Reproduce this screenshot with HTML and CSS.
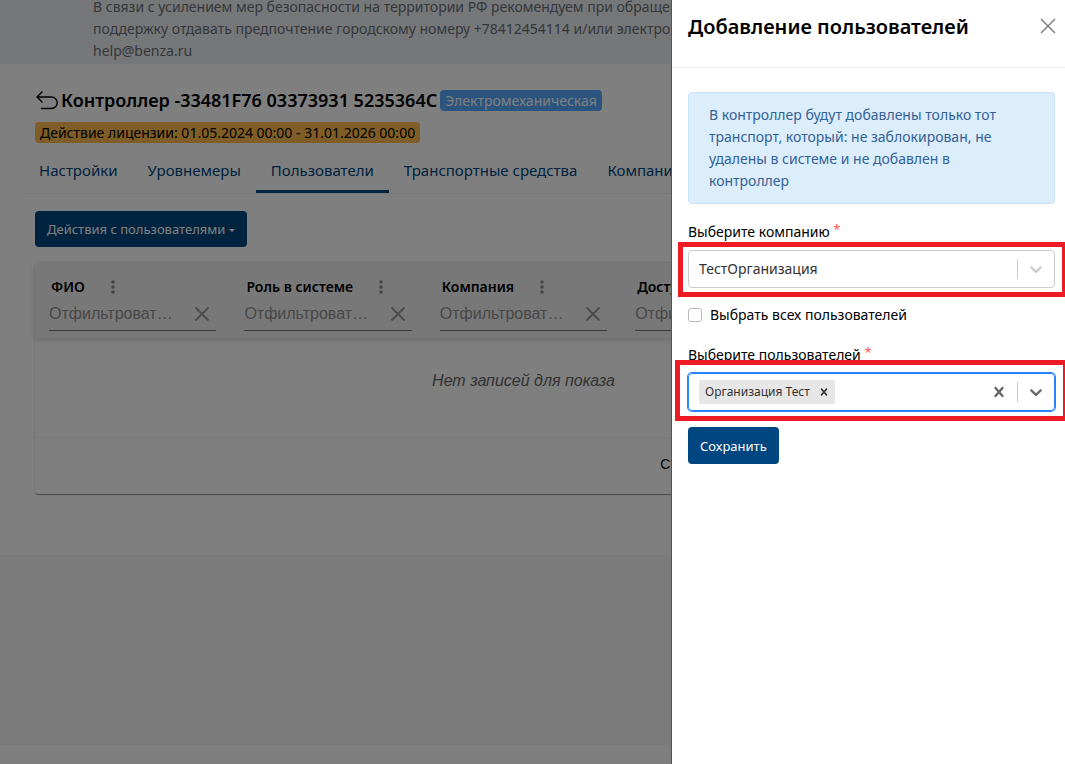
FILE: index.html
```html
<!DOCTYPE html>
<html lang="ru">
<head>
  <meta charset="utf-8">
  <meta name="viewport" content="width=device-width, initial-scale=1">
  <title>Добавление пользователей</title>
  <link rel="stylesheet" href="styles.css">
</head>
<body>
  <div class="page">
    <header class="notice">
      <p>В связи с усилением мер безопасности на территории РФ рекомендуем при обращении в<br>
      поддержку отдавать предпочтение городскому номеру +78412454114 и/или электронной почте<br>
      help@benza.ru</p>
    </header>

    <main class="content">
      <div class="title">
        <a class="back" href="#" aria-label="Назад">
          <svg width="22" height="19" viewBox="0 0 22 19" fill="none" stroke="#000" stroke-width="1.4" stroke-linecap="round" stroke-linejoin="round"><path d="M6 1L1 6l5 5M1 6h14.500a5.600 5.600 0 0 1 0 11.500H5.500"/></svg>
        </a>
        <h1>Контроллер -33481F76 03373931 5235364C</h1>
        <span class="badge badge-info">Электромеханическая</span>
      </div>
      <span class="badge badge-warning">Действие лицензии: 01.05.2024 00:00 - 31.01.2026 00:00</span>

      <nav class="tabs">
        <a href="#">Настройки</a>
        <a href="#">Уровнемеры</a>
        <a href="#" class="active">Пользователи</a>
        <a href="#">Транспортные средства</a>
        <a href="#">Компании</a>
      </nav>

      <button type="button" class="btn btn-actions">Действия с пользователями <span class="caret"></span></button>

      <div class="table-card">
        <table>
          <thead>
            <tr>
              <th>
                <div class="th-label">ФИО <svg width="4" height="14" viewBox="0 0 4 14" fill="#8c8c8c"><circle cx="2" cy="2" r="1.800"/><circle cx="2" cy="7" r="1.800"/><circle cx="2" cy="12" r="1.800"/></svg></div>
                <div class="filter"><input type="text" placeholder="Отфильтровать по ФИО" aria-label="ФИО"><svg width="14" height="14" viewBox="0 0 14 14" stroke="#999" stroke-width="2"><path d="M.5.5l13 13M13.500.5l-13 13"/></svg></div>
              </th>
              <th>
                <div class="th-label">Роль в системе <svg width="4" height="14" viewBox="0 0 4 14" fill="#8c8c8c"><circle cx="2" cy="2" r="1.800"/><circle cx="2" cy="7" r="1.800"/><circle cx="2" cy="12" r="1.800"/></svg></div>
                <div class="filter"><input type="text" placeholder="Отфильтровать по роли" aria-label="Роль в системе"><svg width="14" height="14" viewBox="0 0 14 14" stroke="#999" stroke-width="2"><path d="M.5.5l13 13M13.500.5l-13 13"/></svg></div>
              </th>
              <th>
                <div class="th-label">Компания <svg width="4" height="14" viewBox="0 0 4 14" fill="#8c8c8c"><circle cx="2" cy="2" r="1.800"/><circle cx="2" cy="7" r="1.800"/><circle cx="2" cy="12" r="1.800"/></svg></div>
                <div class="filter"><input type="text" placeholder="Отфильтровать по компании" aria-label="Компания"><svg width="14" height="14" viewBox="0 0 14 14" stroke="#999" stroke-width="2"><path d="M.5.5l13 13M13.500.5l-13 13"/></svg></div>
              </th>
              <th>
                <div class="th-label">Доступ</div>
                <div class="filter"><input type="text" placeholder="Отфильтровать по доступу" aria-label="Доступ"></div>
              </th>
              <th></th>
            </tr>
          </thead>
          <tbody>
            <tr><td colspan="5">Нет записей для показа</td></tr>
          </tbody>
        </table>
        <div class="table-footer"><span>Строк на странице</span></div>
      </div>
    </main>
    <footer class="footer"></footer>
  </div>

  <div class="backdrop"></div>

  <aside class="drawer" role="dialog" aria-labelledby="drawer-title">
    <div class="drawer-header">
      <h2 id="drawer-title">Добавление пользователей</h2>
      <button type="button" class="icon-btn" aria-label="Закрыть">
        <svg width="16" height="16" viewBox="0 0 16 16" stroke="#808080" stroke-width="1.500"><path d="M1 1l14 14M15 1L1 15"/></svg>
      </button>
    </div>
    <form class="drawer-body">
      <div class="alert">В контроллер будут добавлены только тот транспорт, который: не заблокирован, не удалены в системе и не добавлен в контроллер</div>

      <label class="label" for="company">Выберите компанию <sup>*</sup></label>
      <div class="control">
        <select id="company"><option>ТестОрганизация</option></select>
        <span class="separator"></span>
        <svg class="chevron" width="20" height="20" viewBox="0 0 20 20" fill="#ccc"><path d="M4.516 7.548c0.436-0.446 1.043-0.481 1.576 0l3.908 3.747 3.908-3.747c0.533-0.481 1.141-0.446 1.574 0 0.436 0.445 0.408 1.197 0 1.615-0.406 0.418-4.695 4.502-4.695 4.502-0.217 0.223-0.502 0.335-0.787 0.335s-0.570-0.112-0.789-0.335c0 0-4.287-4.084-4.695-4.502s-0.436-1.170 0-1.615z"/></svg>
        <span class="mark"></span>
      </div>

      <div class="check">
        <input type="checkbox" id="all">
        <label for="all">Выбрать всех пользователей</label>
      </div>

      <label class="label" for="users">Выберите пользователей <sup>*</sup></label>
      <div class="control focused">
        <span class="chip">Организация Тест
          <button type="button" class="icon-btn" aria-label="Удалить"><svg width="14" height="14" viewBox="0 0 20 20" fill="#333"><path d="M14.348 14.849c-0.469 0.469-1.229 0.469-1.697 0l-2.651-3.030-2.651 3.029c-0.469 0.469-1.229 0.469-1.697 0-0.469-0.469-0.469-1.229 0-1.697l2.758-3.150-2.759-3.152c-0.469-0.469-0.469-1.228 0-1.697s1.228-0.469 1.697 0l2.652 3.031 2.651-3.031c0.469-0.469 1.228-0.469 1.697 0s0.469 1.229 0 1.697l-2.758 3.152 2.758 3.150c0.469 0.469 0.469 1.229 0 1.698z"/></svg></button>
        </span>
        <input type="text" id="users">
        <button type="button" class="icon-btn clear" aria-label="Очистить"><svg width="20" height="20" viewBox="0 0 20 20" fill="#666"><path d="M14.348 14.849c-0.469 0.469-1.229 0.469-1.697 0l-2.651-3.030-2.651 3.029c-0.469 0.469-1.229 0.469-1.697 0-0.469-0.469-0.469-1.229 0-1.697l2.758-3.150-2.759-3.152c-0.469-0.469-0.469-1.228 0-1.697s1.228-0.469 1.697 0l2.652 3.031 2.651-3.031c0.469-0.469 1.228-0.469 1.697 0s0.469 1.229 0 1.697l-2.758 3.152 2.758 3.150c0.469 0.469 0.469 1.229 0 1.698z"/></svg></button>
        <span class="separator"></span>
        <svg class="chevron" width="20" height="20" viewBox="0 0 20 20" fill="#666"><path d="M4.516 7.548c0.436-0.446 1.043-0.481 1.576 0l3.908 3.747 3.908-3.747c0.533-0.481 1.141-0.446 1.574 0 0.436 0.445 0.408 1.197 0 1.615-0.406 0.418-4.695 4.502-4.695 4.502-0.217 0.223-0.502 0.335-0.787 0.335s-0.570-0.112-0.789-0.335c0 0-4.287-4.084-4.695-4.502s-0.436-1.170 0-1.615z"/></svg>
        <span class="mark mark-lg"></span>
      </div>

      <button type="submit" class="btn">Сохранить</button>
    </form>
  </aside>
</body>
</html>
```
FILE: styles.css
```css
* {box-sizing: border-box;}
body {margin: 0; font: 14px/22px "Noto Sans", sans-serif; color: #000; overflow: hidden;}
h1, h2, p {margin: 0;}
a {color: inherit; text-decoration: none;}
button, input, select {font: inherit;}

.page {min-height: 100vh; background: #fff;}
.notice {display: flex; align-items: flex-end; height: 64px; padding: 0 0 2px 93px; background: #ebeff3; color: #6c7178; white-space: nowrap;}

.content {padding: 23px 53px 60px 35px;}
.title {display: flex; align-items: center; gap: 3px; height: 26px; margin-bottom: 9px; white-space: nowrap;}
.title h1 {font-size: 18px; line-height: 24px; font-weight: 600;}
.back {display: flex; margin-left: 1px;}
.badge {display: inline-block; padding: 0 5px; border-radius: 4px; line-height: 21px; white-space: nowrap;}
.badge-info {background: #56aaff; color: #fff;}
.badge-warning {background: #ffba4e;}

.tabs {display: flex; margin: 4px 0 17px -11px; border-bottom: 1px solid #eee; white-space: nowrap; color: #004680; font-size: 15px;}
.tabs a {padding: 11px 15px 9px; border-bottom: 3px solid transparent;}
.tabs .active {border-color: #004680;}

.btn {height: 37px; padding: 0 12px; border: 0; border-radius: 4px; background: #004680; color: #fff; font-size: 13px;}
.btn-actions {height: 36px;}
.caret {display: inline-block; border: 3px solid transparent; border-top-color: #fff; border-bottom: 0; vertical-align: middle;}

.table-card {margin-top: 16px; border-radius: 4px; border-bottom: 1px solid #999; box-shadow: 0 0 2px rgba(0, 0, 0, .2);}
table {width: 100%; table-layout: fixed; border-collapse: collapse;}
thead {background: #f0f0f0; box-shadow: 0 2px 6px rgba(0, 0, 0, .15);}
th {height: 75px; padding: 14px 14px 6px; text-align: left; vertical-align: top;}
th:last-child {padding: 0;}
.th-label {display: flex; align-items: center; gap: 26px; height: 20px; padding-left: 2px; font-weight: 600; white-space: nowrap;}
.filter {display: flex; align-items: center; height: 34px; padding-right: 7px; border-bottom: 1px solid #777; gap: 20px;}
.filter input {flex: 1; min-width: 0; padding: 0; border: 0; background: none; font: 16px "Liberation Sans", sans-serif; text-overflow: ellipsis;}
.filter input::placeholder {color: #909090;}
.filter svg {flex: none;}
td {height: 99px; padding: 0 0 12px; border-bottom: 1px solid #f5f5f5; text-align: center; font: italic 16px "Liberation Sans", sans-serif; color: #666;}
.table-footer {height: 56px; padding: 15px 0 0 64%;}
.table-footer span {font: 14px "Liberation Sans", sans-serif;}
.footer {height: 190px; background: #f7f7f8;}

.backdrop {position: fixed; inset: 0; background: rgba(0, 0, 0, .5);}

.drawer {position: fixed; top: 0; right: 0; bottom: 0; width: 394px; max-width: 100%; overflow: hidden; border-left: 1px solid #555; background: #fff;}
.drawer-header {display: flex; align-items: flex-start; justify-content: space-between; height: 68px; padding: 14px 5px 0 16px; border-bottom: 1px solid #eee;}
.drawer-header h2 {font-size: 20px; line-height: 26px; font-weight: 600;}
.icon-btn {display: flex; padding: 4px; border: 0; background: none;}
.drawer-body {padding: 24px 10px 0 16px;}
.alert {margin-bottom: 17px; padding: 11px 48px 11px 20px; border: 1px solid #c6e1f9; border-radius: 4px; background: #dcedfc; color: #346296;}
.label {display: block; margin-bottom: 7px;}
.label sup {color: #f55; font-size: 13px; line-height: 0; vertical-align: 3px;}
.control {position: relative; display: flex; align-items: center; height: 38px; padding-right: 8px; border: 1px solid #ccc; border-radius: 4px;}
.control select {flex: 1; height: 36px; padding: 0 10px; border: 0; background: none; appearance: none; color: #333;}
.control input {flex: 1; min-width: 0; border: 0; outline: 0; background: none;}
.focused {border-color: #2684ff; box-shadow: 0 0 0 1px #2684ff;}
.separator {width: 1px; height: 20px; margin-right: 8px; background: #ccc;}
.chip {display: flex; align-items: center; gap: 3px; height: 24px; margin-left: 10px; padding: 0 0 0 6px; border-radius: 2px; background: #e6e6e6; color: #333; font-size: 12px; white-space: nowrap;}
.clear {margin-right: 4px;}
/* red frames around the fields to fill in */
.mark {position: absolute; inset: -9px -13px -10px -11px; border: 5px solid #ed1c24; pointer-events: none;}
.mark-lg {inset: -14px -14px -11px -14px;}
.check {display: flex; align-items: center; gap: 8px; margin: 16px 0 18px;}
.check input {appearance: none; width: 14px; height: 14px; margin: 0; border: 1px solid #bbb; border-radius: 3px;}
.drawer-body .btn {margin-top: 16px;}
```
